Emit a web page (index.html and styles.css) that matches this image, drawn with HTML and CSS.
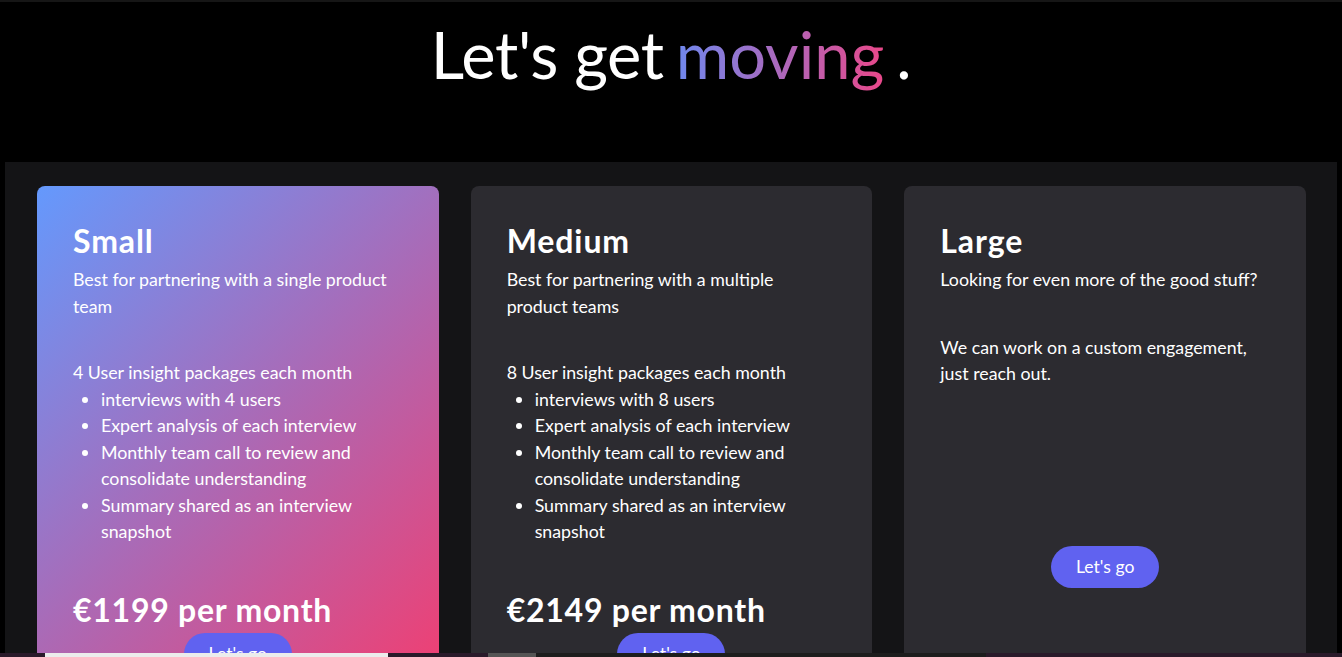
FILE: index.html
```html
<!DOCTYPE html>
<html lang="en">
<head>
<meta charset="utf-8">
<title>Pricing</title>
<link rel="stylesheet" href="styles.css">
</head>
<body>
<div class="topline"></div>
<header class="hero">
  <h1 class="hero-title">Let's get<span class="grad">moving</span><span class="dot">.</span></h1>
</header>
<section class="plans">
  <article class="card card-featured">
    <h2 class="card-title">Small</h2>
    <p class="card-sub">Best for partnering with a single product team</p>
    <div class="features">
      <p class="features-lead">4 User insight packages each month</p>
      <ul class="features-list">
        <li>interviews with 4 users</li>
        <li>Expert analysis of each interview</li>
        <li>Monthly team call to review and consolidate understanding</li>
        <li>Summary shared as an interview snapshot</li>
      </ul>
    </div>
    <p class="price">€1199 per month</p>
    <div class="btn-row"><button class="btn">Let's go</button></div>
  </article>
  <article class="card">
    <h2 class="card-title">Medium</h2>
    <p class="card-sub">Best for partnering with a multiple product teams</p>
    <div class="features">
      <p class="features-lead">8 User insight packages each month</p>
      <ul class="features-list">
        <li>interviews with 8 users</li>
        <li>Expert analysis of each interview</li>
        <li>Monthly team call to review and consolidate understanding</li>
        <li>Summary shared as an interview snapshot</li>
      </ul>
    </div>
    <p class="price">€2149 per month</p>
    <div class="btn-row"><button class="btn">Let's go</button></div>
  </article>
  <article class="card">
    <h2 class="card-title">Large</h2>
    <p class="card-sub">Looking for even more of the good stuff?</p>
    <div class="features features-custom">
      <p class="features-lead">We can work on a custom engagement, just reach out.</p>
    </div>
    <div class="btn-row btn-row-custom"><button class="btn">Let's go</button></div>
  </article>
</section>
<div class="bottom-strip">
  <span class="strip-seg strip-a"></span>
  <span class="strip-seg strip-light"></span>
  <span class="strip-seg strip-b"></span>
  <span class="strip-seg strip-grey"></span>
  <span class="strip-seg strip-dark"></span>
  <span class="strip-seg strip-c"></span>
</div>
</body>
</html>
```

FILE: styles.css
```css
* { box-sizing: border-box; }

html, body {
  margin: 0;
  padding: 0;
  background: #000;
  color: #fff;
  font-family: Lato, "Open Sans", sans-serif;
}

body { overflow: hidden; height: 657px; }

.topline {
  height: 2px;
  background: #161616;
}

.hero {
  height: 160px;
  display: flex;
  justify-content: center;
}

.hero-title {
  margin: 0;
  padding-top: 12px;
  font-size: 65px;
  font-weight: 400;
  line-height: 80px;
  letter-spacing: -0.4px;
}

.grad {
  margin-left: 12px;
  letter-spacing: 0;
  background: linear-gradient(to right, #6f88ee, #e9488a);
  -webkit-background-clip: text;
  background-clip: text;
  color: transparent;
}

.dot { margin-left: 12px; }

.plans {
  margin: 0 5px;
  background: #141416;
  padding: 24px 31px 0 32px;
  display: grid;
  grid-template-columns: repeat(3, 1fr);
  gap: 32px;
}

.card {
  background: #2c2b30;
  border-radius: 8px;
  padding: 36px 36px 40px;
  min-height: 520px;
  font-size: 17.8px;
  line-height: 26.5px;
  letter-spacing: 0;
}

.card-featured {
  background: linear-gradient(135deg, #6499fd 0%, #b364ad 55%, #f63b6c 100%);
}

.card-title {
  margin: 0 0 7px;
  padding-top: 1px;
  font-size: 32px;
  line-height: 36px;
  font-weight: 700;
  letter-spacing: 0.9px;
}

.card-sub { margin: 0; }

.features { margin-top: 40px; }
.features-custom { margin-top: 41px; }

.features-lead { margin: 0; }

.features-list {
  margin: 0;
  padding-left: 28px;
}

.price {
  margin: 47px 0 0;
  font-size: 32px;
  line-height: 36px;
  font-weight: 700;
  letter-spacing: 0.75px;
}

.btn-row {
  display: flex;
  justify-content: center;
  margin-top: 5px;
}

.btn-row-custom { margin-top: 159px; }

.btn {
  height: 42px;
  width: 108px;
  border: 0;
  border-radius: 21px;
  background: #6062f0;
  color: #fff;
  font-family: inherit;
  font-size: 17.6px;
  cursor: pointer;
}

.bottom-strip {
  position: fixed;
  left: 0;
  right: 0;
  bottom: 0;
  height: 4px;
  display: flex;
}

.strip-seg { display: block; height: 100%; }
.strip-a { width: 45px; background: #2a1a2a; }
.strip-light { width: 343px; background: #ececec; }
.strip-b { width: 100px; background: #2a1a2a; }
.strip-grey { width: 48px; background: #555; }
.strip-dark { width: 450px; background: #1d1d1d; }
.strip-c { flex: 1; background: #2a1a2a; }
```
